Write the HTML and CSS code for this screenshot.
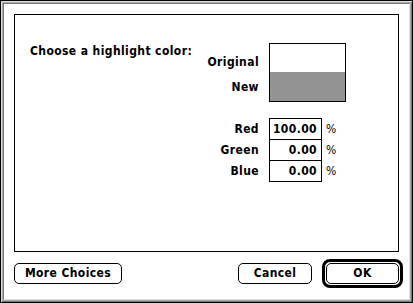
FILE: index.html
```html
<!DOCTYPE html>
<html lang="en">
<head>
  <meta charset="UTF-8" />
  <meta name="viewport" content="width=device-width, initial-scale=1.0"/>
  <title>Highlight Color</title>
  <link rel="stylesheet" href="styles.css">
</head>
<body>
  <div class="dialog">
    <div class="surface">
      <div class="panel">
        <div class="top">
          <div class="prompt">Choose a highlight color:</div>
          <div class="swatch-labels">
            <div class="label-original">Original</div>
            <div class="label-new">New</div>
          </div>
          <div class="swatch">
            <div class="swatch-original"></div>
            <div class="swatch-new"></div>
          </div>
        </div>
        <div class="fields">
          <div class="field-label">Red</div>
          <div class="field-value">100.00</div>
          <div class="field-unit">%</div>
          <div class="field-label">Green</div>
          <div class="field-value">0.00</div>
          <div class="field-unit">%</div>
          <div class="field-label">Blue</div>
          <div class="field-value last">0.00</div>
          <div class="field-unit">%</div>
        </div>
      </div>
      <div class="buttons">
        <button class="btn btn-more">More Choices</button>
        <div class="spacer"></div>
        <button class="btn btn-cancel">Cancel</button>
        <div class="default-ring">
          <button class="btn btn-ok">OK</button>
        </div>
      </div>
    </div>
  </div>
</body>
</html>
```

FILE: styles.css
```css
* {
  margin: 0;
  padding: 0;
  box-sizing: border-box;
}

body {
  width: 413px;
  height: 303px;
  background: #fff;
  font-family: "DejaVu Sans Condensed", "DejaVu Sans", sans-serif;
  font-stretch: condensed;
  font-weight: bold;
  font-size: 12px;
  line-height: 16px;
  letter-spacing: 0.4px;
  color: #000;
}

.dialog {
  width: 413px;
  height: 303px;
  border: 1px solid #000;
  padding: 2px;
  background: #aaa;
  box-shadow: inset 1px 1px #ddd, inset -1px -1px #777;
}

.surface {
  height: 100%;
  background: #fff;
  border: 1px solid;
  border-color: #777 #ddd #ddd #777;
  padding: 10px 10px 0 10px;
  display: flex;
  flex-direction: column;
}

.panel {
  height: 238px;
  border: 1px solid #000;
  padding: 28px 52px 0 15px;
}

.top {
  display: flex;
}

.prompt {
  flex: 1;
}

.swatch-labels {
  text-align: right;
  padding-top: 11px;
  padding-right: 10px;
}

.label-new {
  margin-top: 9px;
}

.swatch {
  width: 77px;
  border: 1px solid #000;
}

.swatch-original {
  height: 28px;
  background: #fff;
}

.swatch-new {
  height: 29px;
  background: #939393;
}

.fields {
  margin-top: 16px;
  display: grid;
  grid-template-columns: 1fr 53px 24px;
}

.field-label {
  text-align: right;
  padding: 1px 10px 0 0;
  line-height: 20px;
}

.field-value {
  border: 1px solid #000;
  border-bottom: none;
  line-height: 20px;
  text-align: right;
  padding-right: 4px;
}

.field-value.last {
  border-bottom: 1px solid #000;
}

.field-unit {
  padding: 1px 0 0 4px;
  line-height: 20px;
  font-weight: normal;
}

.buttons {
  margin-top: 7px;
  height: 29px;
  display: flex;
  align-items: center;
}

.spacer {
  flex: 1;
}

.btn {
  height: 21px;
  border: 1px solid #000;
  border-radius: 5px;
  background: #fff;
  font: inherit;
  letter-spacing: inherit;
  line-height: 19px;
  color: #000;
  text-align: center;
}

.btn-more {
  width: 108px;
}

.btn-cancel {
  width: 74px;
  margin-right: 10px;
}

.default-ring {
  border: 3px solid #000;
  border-radius: 8px;
  padding: 1px;
  margin-right: -4px;
  display: flex;
}

.btn-ok {
  width: 73px;
}
```
